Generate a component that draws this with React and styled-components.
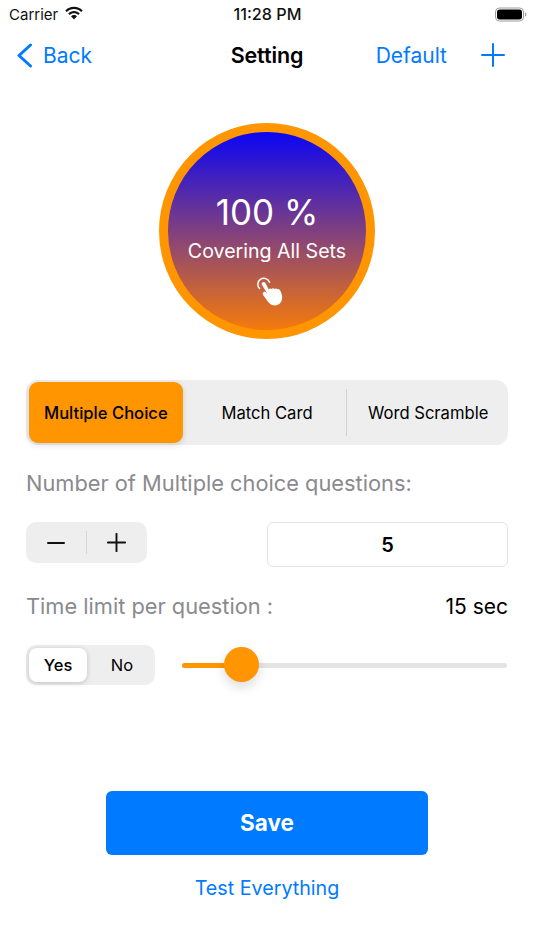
import React from "react";
import styled, { createGlobalStyle } from "styled-components";

const Global = createGlobalStyle`
  html, body { margin: 0; padding: 0; background: #fff; }
  body { font-family: Inter, "Liberation Sans", sans-serif; -webkit-font-smoothing: antialiased; }
  * { box-sizing: border-box; }
`;

const Page = styled.div`
  width: 534px;
  height: 950px;
  overflow: hidden;
  display: flex;
  flex-direction: column;
  background: #fff;
  color: #000;
`;

const StatusBar = styled.div`
  height: 28px;
  display: grid;
  grid-template-columns: minmax(0, 1fr) auto minmax(0, 1fr);
  align-items: center;
  padding: 0 7px 0 9px;
  color: #111;
`;
const Carrier = styled.div`
  display: flex;
  align-items: center;
  gap: 6px;
  font-size: 15px;
`;
const WifiIcon = styled.svg`
  margin-top: -2px;
`;
const Clock = styled.div`
  font-size: 16.2px;
  font-weight: 500;
  margin-left: -1px;
`;
const BatteryWrap = styled.div`
  display: flex;
  justify-content: flex-end;
`;

const NavBar = styled.div`
  height: 54px;
  display: grid;
  grid-template-columns: minmax(0, 1fr) auto minmax(0, 1fr);
  align-items: center;
  padding: 0 17px;
`;
const BackLink = styled.div`
  display: flex;
  align-items: center;
  gap: 10px;
  font-size: 21px;
  color: #007aff;
`;
const Title = styled.div`
  font-size: 21.5px;
  font-weight: 600;
  letter-spacing: -0.1px;
`;
const NavRight = styled.div`
  display: flex;
  justify-content: flex-end;
  align-items: center;
  gap: 34px;
  padding-right: 12px;
  font-size: 21px;
  color: #007aff;
`;

const Circle = styled.div`
  width: 216px;
  height: 216px;
  margin: 41px auto 0;
  border-radius: 50%;
  border: 9px solid #ff9500;
  background: linear-gradient(180deg, #0000ff 0%, #ff8000 100%) border-box;
  display: flex;
  flex-direction: column;
  align-items: center;
  color: #fff;
`;
const Percent = styled.div`
  margin-top: 57px;
  height: 46px;
  line-height: 46px;
  font-size: 35px;
`;
const Covering = styled.div`
  margin-top: 3px;
  height: 26px;
  line-height: 26px;
  font-size: 19.6px;
`;
const Tap = styled.svg`
  margin-top: 12px;
  margin-left: 6px;
`;

const Content = styled.div`
  padding: 41px 26px 0;
  display: flex;
  flex-direction: column;
`;
const Segments = styled.div`
  height: 65px;
  border-radius: 12px;
  background: #eeeeef;
  padding: 2px 3px;
  display: grid;
  grid-template-columns: repeat(3, 1fr);
  align-items: stretch;
`;
const Segment = styled.div`
  display: flex;
  align-items: center;
  justify-content: center;
  font-size: 16.6px;
  font-weight: ${(p) => (p.$active ? 500 : 400)};
  border-radius: 9px;
  margin-right: ${(p) => (p.$active ? "5px" : "0")};
  padding-left: ${(p) => (p.$divided ? "5px" : "0")};
  background: ${(p) => (p.$active ? "#ff9500" : "transparent")};
  box-shadow: ${(p) => (p.$active ? "0 2px 6px rgba(0,0,0,0.14)" : "none")};
  position: relative;
  white-space: nowrap;
  ${(p) =>
    p.$divided &&
    `&::before { content: ""; position: absolute; left: 0; top: 7px; bottom: 7px; width: 1px; background: #d2d2d4; }`}
`;
const Label = styled.div`
  font-size: 21.8px;
  line-height: 28px;
  color: #8a8a8e;
`;
const QuestionLabel = styled(Label)`
  margin-top: 24px;
`;
const StepperRow = styled.div`
  margin-top: 25px;
  display: flex;
  justify-content: space-between;
  align-items: flex-start;
`;
const Stepper = styled.div`
  width: 121px;
  height: 41px;
  border-radius: 10px;
  background: #eeeeef;
  display: grid;
  grid-template-columns: 1fr 1fr;
  align-items: center;
  justify-items: center;
  position: relative;
  &::before {
    content: "";
    position: absolute;
    left: 60px;
    top: 9px;
    bottom: 9px;
    width: 1px;
    background: #d6d6d8;
  }
`;
const CountBox = styled.div`
  width: 241px;
  height: 45px;
  border: 1px solid #e4e4e6;
  border-radius: 6px;
  display: flex;
  align-items: center;
  justify-content: center;
  font-size: 20px;
  font-weight: 600;
`;
const TimeRow = styled.div`
  margin-top: 25px;
  display: flex;
  justify-content: space-between;
  align-items: center;
`;
const TimeValue = styled.div`
  font-size: 21px;
`;
const ControlRow = styled.div`
  margin-top: 25px;
  display: flex;
  align-items: center;
  gap: 27px;
`;
const Toggle = styled.div`
  width: 129px;
  height: 40px;
  border-radius: 10px;
  background: #eeeeef;
  padding: 3px;
  display: grid;
  grid-template-columns: 58px 1fr;
`;
const ToggleOption = styled.div`
  display: flex;
  align-items: center;
  justify-content: center;
  font-size: 16.5px;
  font-weight: ${(p) => (p.$active ? 500 : 400)};
  padding-left: ${(p) => (p.$active ? "0" : "5px")};
  border-radius: 8px;
  background: ${(p) => (p.$active ? "#fff" : "transparent")};
  box-shadow: ${(p) => (p.$active ? "0 1px 5px rgba(0,0,0,0.2)" : "none")};
`;
const Slider = styled.div`
  position: relative;
  width: 325px;
  height: 5px;
  border-radius: 3px;
  background: #e4e4e6;
`;
const SliderFill = styled.div`
  height: 100%;
  border-radius: 3px;
  background: #ff9500;
`;
const Thumb = styled.div`
  position: absolute;
  top: -16px;
  width: 35px;
  height: 35px;
  border-radius: 50%;
  background: #ff9500;
  box-shadow: 0 5px 12px rgba(0, 0, 0, 0.14);
`;
const SaveButton = styled.div`
  width: 322px;
  height: 64px;
  margin: 106px auto 0;
  border-radius: 6px;
  background: #007aff;
  color: #fff;
  display: flex;
  align-items: center;
  justify-content: center;
  font-size: 22.5px;
  font-weight: 700;
  padding-bottom: 2px;
`;
const TestLink = styled.div`
  margin-top: 20px;
  text-align: center;
  font-size: 19.7px;
  line-height: 26px;
  color: #007aff;
`;

const Wifi = () => (
  <WifiIcon width="20" height="15" viewBox="0 0 20 14" fill="#111">
    <path d="M10 2.6c2.8 0 5.3 1.1 7.2 2.9l1.5-1.6C16.4 1.7 13.4.3 10 .3S3.6 1.7 1.3 3.9l1.5 1.6C4.7 3.7 7.2 2.6 10 2.6z" />
    <path d="M10 6.7c1.7 0 3.2.7 4.3 1.7l1.5-1.6C14.3 5.3 12.3 4.4 10 4.4s-4.3.9-5.800 2.4l1.500 1.600C6.800 7.400 8.300 6.700 10 6.700z" />
    <path d="M10 8.500c-1.200 0-2.200.5-3 1.200l3 3.300 3-3.300c-.8-.7-1.800-1.200-3-1.200z" />
  </WifiIcon>
);

const Battery = () => (
  <svg width="32" height="15" viewBox="0 0 32 15">
    <rect x="0.5" y="1" width="28" height="13" rx="4" fill="none" stroke="#9a9a9a" />
    <rect x="2" y="2.5" width="25" height="10" rx="2.7" fill="#000" />
    <path d="M30 5.500c.9.300 1.400 1.100 1.400 2s-.5 1.700-1.400 2z" fill="#9a9a9a" />
  </svg>
);

const Chevron = () => (
  <svg width="16" height="25" viewBox="0 0 16 25" fill="none" stroke="#007aff" strokeWidth="3" strokeLinecap="round" strokeLinejoin="round">
    <path d="M13.500 2 2 12.500 13.500 23" />
  </svg>
);

const PlusIcon = ({ size, width, color }) => (
  <svg width={size} height={size} viewBox="0 0 24 24" stroke={color} strokeWidth={width} strokeLinecap="round" fill="none">
    <path d="M12 1v22M1 12h22" />
  </svg>
);

const Minus = () => (
  <svg width="18" height="18" viewBox="0 0 18 18" stroke="#111" strokeWidth="2" strokeLinecap="round" fill="none">
    <path d="M1 9h16" />
  </svg>
);

const TapIcon = () => (
  <Tap width="27" height="30" viewBox="0 0 27 30" fill="none">
    <path d="M2.600 12.500A6 6 0 1 1 12.500 6.200" stroke="#fff" strokeWidth="1.500" strokeLinecap="round" />
    <path
      d="M5.300 6.500c1-.9 2.500-.6 3.100.6l3.400 6.400c.5-1 2-1.300 2.900-.4.500-1 2.100-1.300 3-.2.700-.7 2.100-.6 2.800.3.700-.4 1.800-.2 2.400.7 1.300 2.200 2.300 5 2.300 7.700 0 4.500-3.100 7.900-7.300 7.900-3.600 0-5.600-1.900-7.500-4.400L6 18.700c-.6-1-.2-2.200.7-2.700 1-.5 2.100-.2 2.800.7l1 1.200L5 9c-.6-.9-.5-1.900.3-2.500z"
      fill="#fff"
    />
  </Tap>
);

export default function App() {
  return (
    <Page>
      <Global />
      <StatusBar>
        <Carrier>
          Carrier
          <Wifi />
        </Carrier>
        <Clock>11:28 PM</Clock>
        <BatteryWrap>
          <Battery />
        </BatteryWrap>
      </StatusBar>
      <NavBar>
        <BackLink>
          <Chevron />
          Back
        </BackLink>
        <Title>Setting</Title>
        <NavRight>
          Default
          <PlusIcon size={24} width={2} color="#007aff" />
        </NavRight>
      </NavBar>
      <Circle>
        <Percent>100 %</Percent>
        <Covering>Covering All Sets</Covering>
        <TapIcon />
      </Circle>
      <Content>
        <Segments>
          <Segment $active>Multiple Choice</Segment>
          <Segment>Match Card</Segment>
          <Segment $divided>Word Scramble</Segment>
        </Segments>
        <QuestionLabel>Number of Multiple choice questions:</QuestionLabel>
        <StepperRow>
          <Stepper>
            <Minus />
            <PlusIcon size={19} width={2.4} color="#111" />
          </Stepper>
          <CountBox>5</CountBox>
        </StepperRow>
        <TimeRow>
          <Label>Time limit per question :</Label>
          <TimeValue>15 sec</TimeValue>
        </TimeRow>
        <ControlRow>
          <Toggle>
            <ToggleOption $active>Yes</ToggleOption>
            <ToggleOption>No</ToggleOption>
          </Toggle>
          <Slider>
            <SliderFill style={{ width: "18%" }} />
            <Thumb style={{ left: 42 }} />
          </Slider>
        </ControlRow>
        <SaveButton>Save</SaveButton>
        <TestLink>Test Everything</TestLink>
      </Content>
    </Page>
  );
}
